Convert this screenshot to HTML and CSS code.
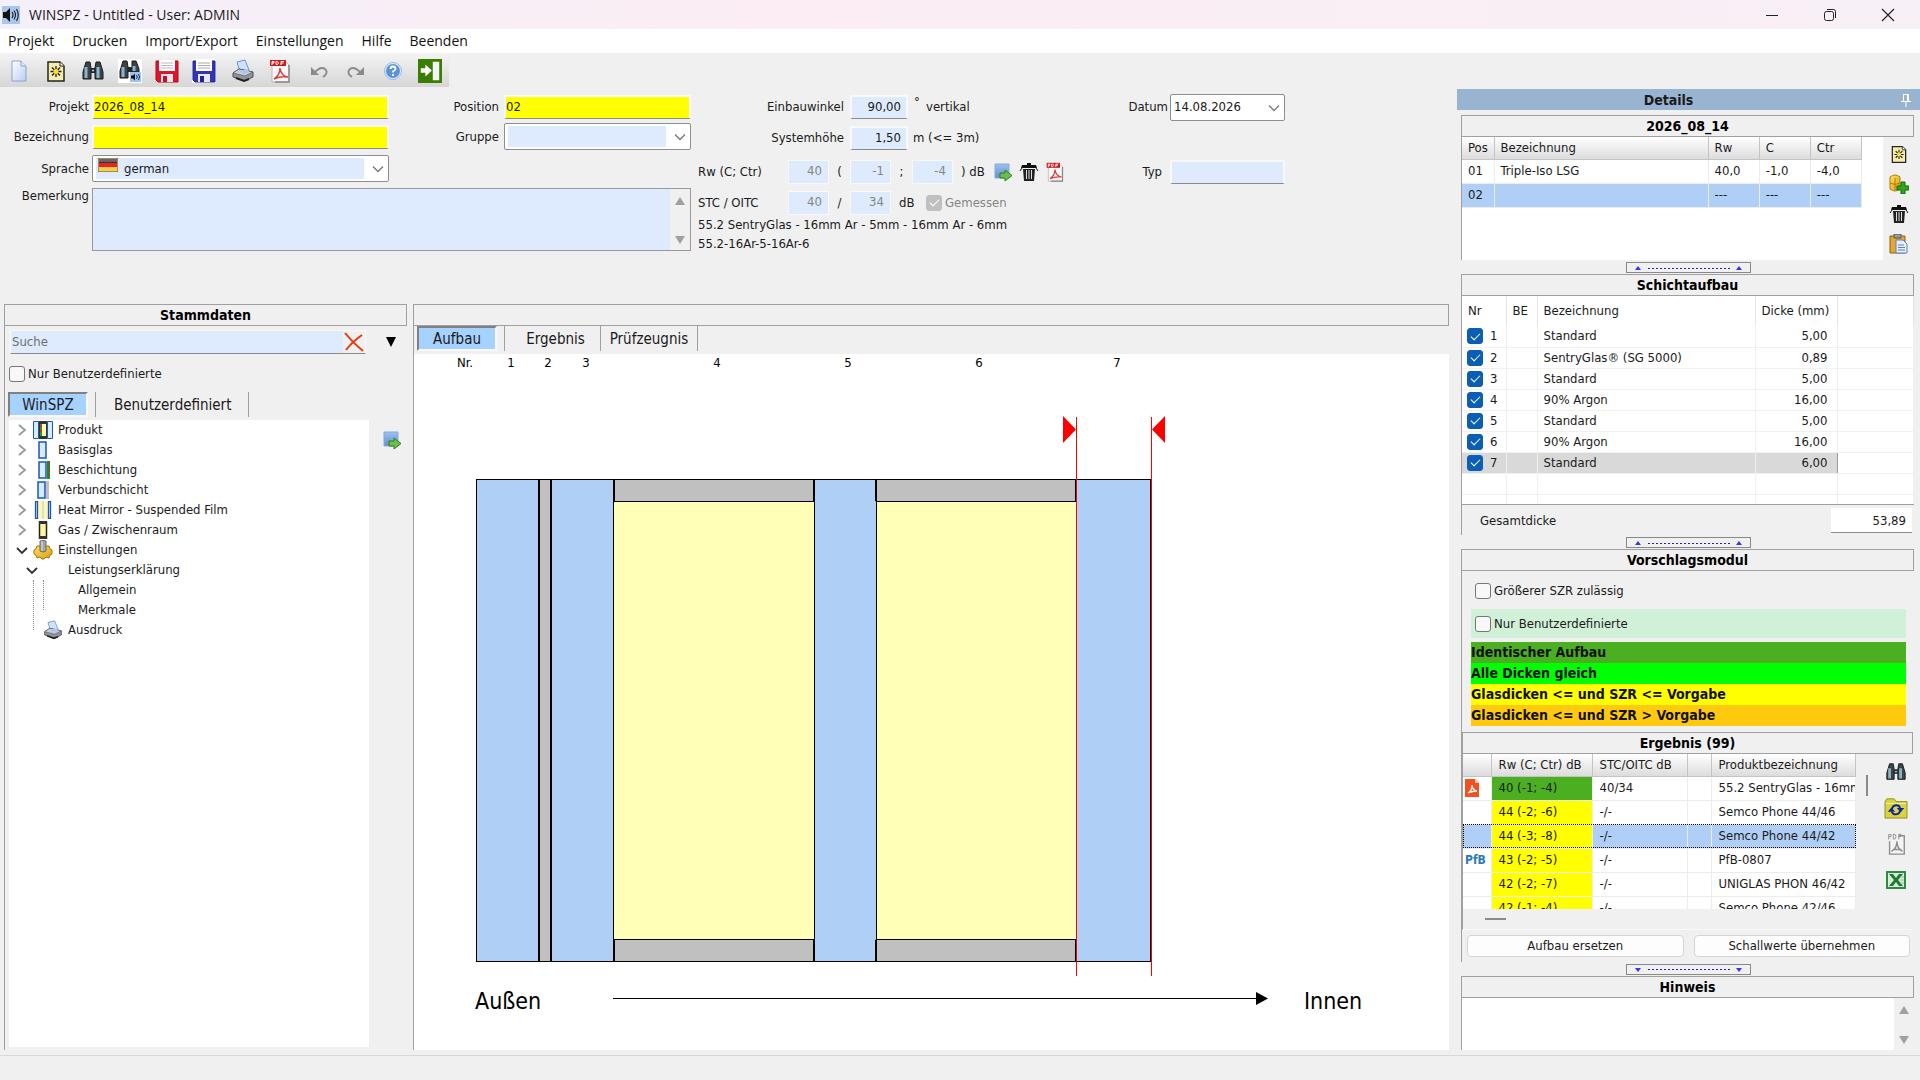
FILE: index.html
```html
<!DOCTYPE html>
<html lang="de">

<head>
    <meta charset="UTF-8">
    <meta name="viewport" content="width=device-width, initial-scale=1.0">
    <title>WINSPZ - Untitled - User: ADMIN</title>
    <link rel="stylesheet" href="styles.css">
</head>

<body>
    <!-- shared icons -->
    <svg class="icon-defs" aria-hidden="true">
        <defs>
            <linearGradient id="g-page" x1="0" y1="0" x2="1" y2="1">
                <stop offset="0" stop-color="#ffffff" />
                <stop offset="1" stop-color="#b9cdf2" />
            </linearGradient>
            <linearGradient id="g-blue" x1="0" y1="0" x2="0" y2="1">
                <stop offset="0" stop-color="#9dc1ee" />
                <stop offset="1" stop-color="#5c8fd6" />
            </linearGradient>
            <linearGradient id="g-gold" x1="0" y1="0" x2="1" y2="1">
                <stop offset="0" stop-color="#ffe463" />
                <stop offset="1" stop-color="#d99a10" />
            </linearGradient>
            <symbol id="i-page" viewBox="0 0 24 24">
                <path d="M5 2h9l5 5v15H5z" fill="url(#g-page)" stroke="#8ba3cf" />
                <path d="M14 2v5h5" fill="#e4edfb" stroke="#8ba3cf" />
            </symbol>
            <symbol id="i-new" viewBox="0 0 24 24">
                <path d="M4 3h12l4 4v15H4z" fill="#f6edb0" stroke="#26261c" stroke-width="1.5" />
                <path d="M16 3v4h4" fill="#fff" stroke="#26261c" />
                <path d="M12 7v11M6.500 12.500h11M8 8.500l8 8M16 8.500l-8 8" stroke="#1d1d12" stroke-width="1.300" />
                <circle cx="12" cy="12.500" r="2.500" fill="#ffdf2a" />
            </symbol>
            <symbol id="i-bino" viewBox="0 0 24 24">
                <path d="M5 3h4l1 6v11H2v-7z" fill="#38464c" stroke="#16191b" />
                <path d="M15 3h4l3 10v7h-8V9z" fill="#38464c" stroke="#16191b" />
                <path d="M10 9h4v5h-4z" fill="#20262a" />
                <path d="M5 8v11M17 8v11" stroke="#8fb3c4" stroke-width="3" />
                <circle cx="12" cy="11.500" r="1" fill="#cfdde2" />
            </symbol>
            <symbol id="i-bino2" viewBox="0 0 24 24">
                <path d="M0 0h24v24H0z" fill="#fff" />
                <path d="M5 2h4l1 6v11H2v-7zM14 2h4l3 8v3h-7z" fill="#38464c" stroke="#16191b" />
                <path d="M10 8h4v5h-4z" fill="#20262a" />
                <path d="M5 8v10M16 7v5" stroke="#8fb3c4" stroke-width="3" />
                <path d="M12 13h11v10H12z" fill="#9fc3ee" />
                <path d="M13 16.500h2l2-2v7l-2-2h-2z" fill="#111" />
                <path d="M18.500 16q1.500 2 0 4M20.500 15q2 3 0 6" fill="none" stroke="#14387a" />
            </symbol>
            <symbol id="i-disk-red" viewBox="0 0 24 24">
                <path d="M1 2h22v21H3l-2-2z" fill="#e3132c" stroke="#b00a20" />
                <path d="M4 1h16v11H4z" fill="#fff" />
                <path d="M6 4h12M6 6.500h12M6 9h12" stroke="#bbb" />
                <path d="M6 15h12v8H6z" fill="#e8e8e8" />
                <path d="M8 17h4v6H8z" fill="#c01025" />
            </symbol>
            <symbol id="i-disk-blue" viewBox="0 0 24 24">
                <path d="M0 0h24v24H0z" fill="#fff" />
                <path d="M1 2h22v21H3l-2-2z" fill="#3333bb" stroke="#22229a" />
                <path d="M4 1h16v11H4z" fill="#fff" />
                <path d="M6 4h12M6 6.500h12M6 9h12" stroke="#aaa" />
                <path d="M6 15h12v8H6z" fill="#e8e8e8" />
                <path d="M8 17h4v6H8z" fill="#22229a" />
            </symbol>
            <symbol id="i-print" viewBox="1 0 22 24">
                <path d="M6 3l8-2 4 10-9 2z" fill="#cfe2fb" stroke="#6f93cf" />
                <path d="M2 14l6-4 14 3v5l-8 4-12-4z" fill="#8f949b" stroke="#4b4f55" />
                <path d="M2 14l6-4 14 3-8 4z" fill="#c9ccd1" stroke="#4b4f55" stroke-width=".6" />
                <path d="M8 12l9-2 1 3-5 2z" fill="#a9c6f3" />
                <path d="M5 19l8 3 5-2" fill="none" stroke="#222" stroke-width="2" />
            </symbol>
            <symbol id="i-pdf" viewBox="0 0 24 24">
                <path d="M4 2h13l4 4v17H4z" fill="#f8f8f8" stroke="#b9b9b9" />
                <path d="M21 6v17H7" fill="none" stroke="#888" stroke-width="1.500" />
                <path d="M2 1h16v6H2z" fill="#cf1b1b" />
                <path d="M4 6V2.500h2v1.500H4M8 2.500v3h1.500l1-1.500-1-1.500zM13 6V2.500h3M13 4h2.500" fill="none" stroke="#fff" />
                <path d="M6 20q6-4 6-11 1 8 8 9-8-1-14 2z" fill="none" stroke="#d84040" stroke-width="1.500" />
            </symbol>
            <symbol id="i-pdf-grey" viewBox="0 0 24 24">
                <path d="M15 3h6v20H5V9" fill="#f4f4f4" stroke="#8d8d8d" stroke-width="1.500" />
                <path d="M4 7V1.500h2.500V4H4M9 1.500v5h2l1-2.500-1-2.500zM15 7V1.500h3M15 4h2.500" fill="none" stroke="#8d8d8d" />
                <path d="M7 20q6-3 6-11 0 8 6 11M9 18h9" fill="none" stroke="#8d8d8d" stroke-width="1.500" />
            </symbol>
            <symbol id="i-undo" viewBox="0 0 24 24">
                <path d="M8 13q6-6 10-3 4 4-2 8" fill="none" stroke="#8a8a8a" stroke-width="1.800" />
                <path d="M4 8v8h8z" fill="#8a8a8a" />
            </symbol>
            <symbol id="i-redo" viewBox="0 0 24 24">
                <path d="M16 13Q10 7 6 10q-4 4 2 8" fill="none" stroke="#8a8a8a" stroke-width="1.800" />
                <path d="M20 8v8h-8z" fill="#8a8a8a" />
            </symbol>
            <symbol id="i-help" viewBox="0 0 24 24">
                <circle cx="12" cy="12" r="8.500" fill="#dfeafa" stroke="#9ab9e4" />
                <circle cx="12" cy="12" r="7" fill="#5b93d9" />
                <path d="M9.500 10q0-2.500 2.500-2.500t2.500 2.500q0 1-2.500 2.500v1M12 15v2" fill="none" stroke="#fff" stroke-width="1.800" />
            </symbol>
            <symbol id="i-exit" viewBox="0 0 26 26">
                <path d="M0 0h26v26H0z" fill="#3a7d00" />
                <path d="M16 3h7v20h-7z" fill="#f4f4f4" />
                <path d="M3 10h5V6l7 6.500L8 19v-4H3z" fill="#fff" />
            </symbol>
            <symbol id="i-sound" viewBox="0 0 18 18">
                <path d="M0 0h18v18H0z" fill="#a6c8f0" />
                <path d="M1 6h3l4-4v14l-4-4H1z" fill="#111" />
                <path d="M10 6q2 3 0 6M12 4.500q3 4.500 0 9M14.500 3q3.500 6 0 12" fill="none" stroke="#222" stroke-width="1.200" />
            </symbol>
            <symbol id="i-apply" viewBox="0 0 20 20">
                <path d="M2 2h14v14H2z" fill="url(#g-blue)" stroke="#86a9dc" />
                <path d="M7 11h5V8l7 5.500-7 5.500v-3H7z" fill="#6cc04a" stroke="#2f7d1c" />
            </symbol>
            <symbol id="i-trash" viewBox="0 0 20 20">
                <path d="M8 1h4v2h5l1 3H2l1-3h5z" fill="#111" />
                <path d="M4 7h12l-1 12H5z" fill="#222" />
                <path d="M7.500 8v9M10 8v9M12.500 8v9" stroke="#ddd" />
                <path d="M3 6l-2 3M17 6l2 3" stroke="#111" />
            </symbol>
            <symbol id="i-dbadd" viewBox="0 0 20 20">
                <path d="M1 3q5-4 10 0v12q-5 4-10 0z" fill="url(#g-gold)" stroke="#b07d09" />
                <path d="M1 9q5 3 10 0M6 4v12" fill="none" stroke="#b07d09" />
                <path d="M12 8h4v4h4v4h-4v4h-4v-4H8v-4h4z" fill="#2da51c" stroke="#14690c" />
            </symbol>
            <symbol id="i-clip" viewBox="0 0 20 20">
                <path d="M1 2h15v17H1z" fill="#e0a92f" stroke="#8d6208" />
                <path d="M5 0h7v4H5z" fill="#9b9b9b" stroke="#555" />
                <path d="M7 6h7l4 4v9H7z" fill="#e6effc" stroke="#5f7fbd" />
                <path d="M9 11h6M9 13.500h7M9 16h7" stroke="#5f7fbd" />
            </symbol>
            <symbol id="i-folder" viewBox="0 0 26 24">
                <path d="M1 5l2-3h8l2 3h12v18H1z" fill="#d8d43a" stroke="#8d8a20" />
                <path d="M2 7h22" stroke="#f6f3a0" />
                <path d="M8.500 13q1-4 5-4 3 0 4 3" fill="none" stroke="#0a1fae" stroke-width="2" />
                <path d="M17.500 15q-1 4-5 4-3 0-4-3" fill="none" stroke="#0a1fae" stroke-width="2" />
                <path d="M14 12h8l-4 4.500zM4 16h8l-4-4.500z" fill="#0a1fae" />
            </symbol>
            <symbol id="i-excel" viewBox="-1 -2 22 22">
                <path d="M0 0h20v18H0z" fill="#2e8b3d" />
                <path d="M2 2h16v14H2z" fill="#d8eedb" />
                <path d="M3 3h4l3 4 3-4h4l-5 6 5 6h-4l-3-4-3 4H3l5-6z" fill="#1c7a2c" />
                <path d="M14 9h4M14 12h4M14 6h4" stroke="#8fc79a" />
            </symbol>
            <symbol id="i-gear" viewBox="0 0 20 20">
                <path d="M1 10l2-1 1-3h12l1 3 2 1v4l-2 1-1 3-3-1-2 2H9l-2-2-3 1-1-3-2-1z" fill="url(#g-gold)" stroke="#a8740a" />
                <path d="M7 1q3-1 6 0v10q-3 2-6 0z" fill="#a4a4a4" stroke="#6a6a6a" />
                <path d="M9 1v10" stroke="#e4e4e4" />
            </symbol>
            <symbol id="i-chevron" viewBox="0 0 12 12">
                <path d="M1 3.500l5 5 5-5" fill="none" stroke="currentColor" stroke-width="1.300" />
            </symbol>
            <symbol id="i-closed" viewBox="0 0 12 12">
                <path d="M3 1l6 5-6 5" fill="none" stroke="#9a9a9a" stroke-width="1.800" />
            </symbol>
            <symbol id="i-open" viewBox="0 0 12 12">
                <path d="M1 4l5 5 5-5" fill="none" stroke="#333" stroke-width="1.800" />
            </symbol>
            <symbol id="i-handle-up" viewBox="0 0 123 9">
                <path d="M8 7l3-4 3 4zM109 7l3-4 3 4z" fill="#3333ff" />
                <path d="M21 5.500h84" stroke="#2020a0" stroke-dasharray="2 2" />
            </symbol>
            <symbol id="i-handle-down" viewBox="0 0 123 9">
                <path d="M8 3l3 4 3-4zM109 3l3 4 3-4z" fill="#3333ff" />
                <path d="M21 4.500h84" stroke="#2020a0" stroke-dasharray="2 2" />
            </symbol>
        </defs>
    </svg>

    <div class="app">
        <!-- window title -->
        <header class="titlebar">
            <svg class="app-icon"><use href="#i-sound" /></svg>
            <span class="title">WINSPZ - Untitled - User: ADMIN</span>
            <div class="window-buttons">
                <button aria-label="Minimieren"><svg viewBox="0 0 14 14"><path d="M1 7.500h12" stroke="#222" /></svg></button>
                <button aria-label="Wiederherstellen"><svg viewBox="0 0 14 14"><rect x="1.500" y="3.500" width="9" height="9" rx="2" fill="none" stroke="#222" /><path d="M4 1.500h6.500q2 0 2 2V10" fill="none" stroke="#222" /></svg></button>
                <button aria-label="Schließen"><svg viewBox="0 0 14 14"><path d="M1 1l12 12M13 1L1 13" stroke="#222" stroke-width="1.200" /></svg></button>
            </div>
        </header>

        <nav class="menu">
            <a href="#">Projekt</a>
            <a href="#">Drucken</a>
            <a href="#">Import/Export</a>
            <a href="#">Einstellungen</a>
            <a href="#">Hilfe</a>
            <a href="#">Beenden</a>
        </nav>

        <div class="toolbar">
            <button aria-label="Neu"><svg><use href="#i-page" /></svg></button>
            <button aria-label="Neue Position"><svg><use href="#i-new" /></svg></button>
            <button aria-label="Suchen"><svg><use href="#i-bino" /></svg></button>
            <button aria-label="Schallsuche"><svg><use href="#i-bino2" /></svg></button>
            <button aria-label="Speichern"><svg><use href="#i-disk-red" /></svg></button>
            <button aria-label="Speichern unter"><svg><use href="#i-disk-blue" /></svg></button>
            <button class="group" aria-label="Drucken"><svg><use href="#i-print" /></svg></button>
            <button aria-label="PDF"><svg><use href="#i-pdf" /></svg></button>
            <button class="group" aria-label="Rückgängig"><svg><use href="#i-undo" /></svg></button>
            <button aria-label="Wiederholen"><svg><use href="#i-redo" /></svg></button>
            <button aria-label="Hilfe"><svg><use href="#i-help" /></svg></button>
            <button aria-label="Beenden"><svg><use href="#i-exit" /></svg></button>
        </div>

        <div class="main">
            <div class="workspace">
                <!-- project form -->
                <form class="form">
                    <div class="form-project">
                        <label for="projekt">Projekt</label>
                        <input class="field required" id="projekt" type="text" value="2026_08_14">
                        <label for="position">Position</label>
                        <input class="field required" id="position" type="text" value="02">

                        <label for="bezeichnung">Bezeichnung</label>
                        <input class="field required" id="bezeichnung" type="text">
                        <label for="gruppe">Gruppe</label>
                        <div class="combo">
                            <select id="gruppe"><option></option></select>
                            <svg class="chevron"><use href="#i-chevron" /></svg>
                        </div>

                        <label for="sprache">Sprache</label>
                        <div class="combo with-flag">
                            <select id="sprache"><option>german</option></select>
                            <svg class="flag" viewBox="0 0 20 14">
                                <path d="M0 0h20v14H0z" fill="#333" />
                                <path d="M1 5h18v4H1z" fill="#e22" />
                                <path d="M1 9h18v4H1z" fill="#f5cf45" />
                                <path d="M1 1h18v3H1z" fill="#666" />
                                <path d="M.5.5h19v13H.5z" fill="none" stroke="#a58a5c" />
                            </svg>
                            <svg class="chevron"><use href="#i-chevron" /></svg>
                        </div>

                        <label class="top" for="bemerkung">Bemerkung</label>
                        <div class="memo">
                            <textarea id="bemerkung"></textarea>
                            <div class="scroll"><i class="up"></i><i class="down"></i></div>
                        </div>
                    </div>

                    <div class="form-values">
                        <div class="lines">
                            <div class="line">
                                <label class="wide" for="winkel">Einbauwinkel</label>
                                <input class="field num" id="winkel" type="text" value="90,00">
                                <span class="degree">°</span><span>vertikal</span>
                            </div>
                            <div class="line">
                                <label class="wide" for="hoehe">Systemhöhe</label>
                                <input class="field num" id="hoehe" type="text" value="1,50">
                                <span class="unit">m (&lt;= 3m)</span>
                            </div>
                        </div>
                        <div class="lines">
                            <div class="line">
                                <label class="start" for="rw">Rw (C; Ctr)</label>
                                <input class="field small" id="rw" type="text" value="40" disabled>
                                <span class="sep">(</span>
                                <input class="field small" aria-label="C" type="text" value="-1" disabled>
                                <span class="sep">;</span>
                                <input class="field small" aria-label="Ctr" type="text" value="-4" disabled>
                                <span class="unit db">) dB</span>
                                <div class="line-icons">
                                    <button type="button" aria-label="Übernehmen"><svg><use href="#i-apply" /></svg></button>
                                    <button type="button" aria-label="Löschen"><svg><use href="#i-trash" /></svg></button>
                                    <button type="button" aria-label="PDF"><svg><use href="#i-pdf" /></svg></button>
                                </div>
                            </div>
                            <div class="line">
                                <label class="start" for="stc">STC / OITC</label>
                                <input class="field small" id="stc" type="text" value="40" disabled>
                                <span class="sep">/</span>
                                <input class="field small" aria-label="OITC" type="text" value="34" disabled>
                                <span class="unit db">dB</span>
                                <label class="check muted"><input type="checkbox" checked disabled>Gemessen</label>
                            </div>
                        </div>
                        <p class="structure">55.2 SentryGlas - 16mm Ar - 5mm - 16mm Ar - 6mm</p>
                        <p class="structure">55.2-16Ar-5-16Ar-6</p>
                    </div>

                    <div class="form-date">
                        <label for="datum">Datum</label>
                        <div class="combo plain">
                            <select id="datum"><option>14.08.2026</option></select>
                            <svg class="chevron"><use href="#i-chevron" /></svg>
                        </div>
                        <label for="typ">Typ</label>
                        <input class="field" id="typ" type="text">
                    </div>
                </form>

                <div class="panels">
                    <!-- master data -->
                    <section class="panel stammdaten">
                        <h2>Stammdaten</h2>
                        <div class="search">
                            <div class="search-box">
                                <input type="text" placeholder="Suche" aria-label="Suche">
                                <button aria-label="Leeren"><svg viewBox="0 0 20 20"><path d="M1 1q8 10 18 18M18 3Q8 10 2 18" fill="none" stroke="#e8380d" stroke-width="2" /></svg></button>
                            </div>
                            <button class="drop" aria-label="Mehr"></button>
                        </div>
                        <label class="check user-only"><input type="checkbox">Nur Benutzerdefinierte</label>
                        <div class="tabs">
                            <button class="tab active">WinSPZ</button>
                            <button class="tab">Benutzerdefiniert</button>
                        </div>
                        <div class="tree-row">
                            <ul class="tree">
                                <li><div class="node"><svg class="arrow"><use href="#i-closed" /></svg>
                                    <svg class="node-icon" viewBox="0 0 20 18"><path d="M.5.5h5v17h-5zM14.500.5h5v17h-5z" fill="#d8eafd" stroke="#1a57b8" /><path d="M6 0h8v18H6z" fill="#333" /><path d="M7 3h6v12H7z" fill="#fff9a8" /><path d="M8 3v12" stroke="#1e9b2b" stroke-width="2" /><path d="M8 4v10" stroke="#e02020" stroke-width="2" stroke-dasharray="2 3" /></svg>Produkt</div></li>
                                <li><div class="node"><svg class="arrow"><use href="#i-closed" /></svg>
                                    <svg class="node-icon" viewBox="0 0 20 18"><path d="M6 1h7v16H6z" fill="#d8eafd" stroke="#1a57b8" stroke-width="1.500" /></svg>Basisglas</div></li>
                                <li><div class="node"><svg class="arrow"><use href="#i-closed" /></svg>
                                    <svg class="node-icon" viewBox="0 0 20 18"><path d="M6 1h7v16H6z" fill="#d8eafd" stroke="#1a57b8" stroke-width="1.500" /><path d="M15.500 0v18" stroke="#1e8b2b" stroke-width="3" /><path d="M15.500 1v16" stroke="#e02020" stroke-dasharray="2 2" /></svg>Beschichtung</div></li>
                                <li><div class="node"><svg class="arrow"><use href="#i-closed" /></svg>
                                    <svg class="node-icon" viewBox="0 0 20 18"><path d="M13 0h3v18h-3z" fill="#c0c0c0" /><path d="M5 1h7v16H5z" fill="#d8eafd" stroke="#1a57b8" stroke-width="1.500" /></svg>Verbundschicht</div></li>
                                <li><div class="node"><svg class="arrow"><use href="#i-closed" /></svg>
                                    <svg class="node-icon" viewBox="0 0 20 18"><path d="M5 0h10v18H5z" fill="#fdf8b8" /><path d="M10 0v18" stroke="#c8c8c8" /><path d="M2.500.5h2v17h-2zM15.500.5h2v17h-2z" fill="#d8eafd" stroke="#1a57b8" stroke-width="1.300" /></svg>Heat Mirror - Suspended Film</div></li>
                                <li><div class="node"><svg class="arrow"><use href="#i-closed" /></svg>
                                    <svg class="node-icon" viewBox="0 0 20 18"><path d="M6.500 1h7v16h-7z" fill="#fdf5a0" stroke="#222" stroke-width="1.500" /><path d="M6 0h8v3H6zM6 15h8v3H6z" fill="#333" /></svg>Gas / Zwischenraum</div></li>
                                <li><div class="node"><svg class="arrow"><use href="#i-open" /></svg>
                                    <svg class="node-icon large"><use href="#i-gear" /></svg>Einstellungen</div>
                                    <ul class="branch">
                                        <li><div class="node"><svg class="arrow"><use href="#i-open" /></svg><span class="node-icon"></span>Leistungserklärung</div>
                                            <ul class="branch">
                                                <li><div class="node"><span class="arrow"></span><span class="node-icon"></span>Allgemein</div></li>
                                                <li><div class="node"><span class="arrow"></span><span class="node-icon"></span>Merkmale</div></li>
                                            </ul>
                                        </li>
                                        <li><div class="node"><span class="arrow"></span><svg class="node-icon large"><use href="#i-print" /></svg>Ausdruck</div></li>
                                    </ul>
                                </li>
                            </ul>
                            <button class="apply" aria-label="Übernehmen"><svg><use href="#i-apply" /></svg></button>
                        </div>
                    </section>

                    <!-- glass cross section -->
                    <section class="panel aufbau">
                        <h2></h2>
                        <div class="tabs">
                            <button class="tab active">Aufbau</button>
                            <button class="tab">Ergebnis</button>
                            <button class="tab tight">Prüfzeugnis</button>
                        </div>
                        <svg class="drawing" viewBox="0 0 1035 696" preserveAspectRatio="xMinYMin meet">
                            <g class="layer-nr">
                                <text x="51" y="13">Nr.</text>
                                <text x="97" y="13">1</text>
                                <text x="134" y="13">2</text>
                                <text x="172" y="13">3</text>
                                <text x="303" y="13">4</text>
                                <text x="434" y="13">5</text>
                                <text x="565" y="13">6</text>
                                <text x="703" y="13">7</text>
                            </g>
                            <g class="glass">
                                <rect x="62.500" y="125.500" width="62" height="482" />
                                <rect x="137.500" y="125.500" width="62" height="482" />
                                <rect x="400.500" y="125.500" width="62" height="482" />
                                <rect x="662.500" y="125.500" width="74" height="482" />
                            </g>
                            <g class="gas">
                                <rect x="199.500" y="125.500" width="201" height="482" />
                                <rect x="462.500" y="125.500" width="200" height="482" />
                            </g>
                            <g class="spacer">
                                <path d="M125 125.500h12v482h-12zM200 125.500h200v22H200zM200 585.500h200v22H200zM462 125.500h200v22H462zM462 585.500h200v22H462z" />
                            </g>
                            <path class="edges" d="M125 126v481M137 126v481M200 126v21M200 586v21M400 126v21M400 586v21M462 126v21M462 586v21M662 126v21M662 586v21" />
                            <path class="selection" d="M662.500 63v559M737.500 63v559" />
                            <path class="marker" d="M649 62v27l13-13.500zM751 62v27l-13-13.500z" />
                            <text class="side" x="61" y="655">Außen</text>
                            <path class="direction" d="M199 644.500h645" />
                            <path d="M842 638l12 6.500-12 6.500z" />
                            <text class="side" x="890" y="655">Innen</text>
                        </svg>
                    </section>
                </div>
            </div>

            <!-- details sidebar -->
            <aside class="details">
                <div class="details-title">
                    <span>Details</span>
                    <svg viewBox="0 0 12 14"><path d="M3.500 1v7M8.500 1v7M3 1.500h5M1 8.500h10M6 9v5M7.500 1v7" fill="none" stroke="#fff" /></svg>
                </div>

                <section class="panel positions">
                    <h2>2026_08_14</h2>
                    <div class="panel-row">
                        <div class="list">
                            <table class="grid positions-table">
                                <thead>
                                    <tr><th>Pos</th><th>Bezeichnung</th><th>Rw</th><th>C</th><th>Ctr</th></tr>
                                </thead>
                                <tbody>
                                    <tr><td>01</td><td>Triple-Iso LSG</td><td>40,0</td><td>-1,0</td><td>-4,0</td></tr>
                                    <tr class="selected"><td>02</td><td></td><td>---</td><td>---</td><td>---</td></tr>
                                </tbody>
                            </table>
                        </div>
                        <div class="side-icons">
                            <button aria-label="Neu"><svg><use href="#i-new" /></svg></button>
                            <button aria-label="Hinzufügen"><svg><use href="#i-dbadd" /></svg></button>
                            <button aria-label="Löschen"><svg><use href="#i-trash" /></svg></button>
                            <button aria-label="Einfügen"><svg><use href="#i-clip" /></svg></button>
                        </div>
                    </div>
                </section>

                <button class="splitter" aria-label="Einklappen"><svg><use href="#i-handle-up" /></svg></button>

                <section class="panel layers">
                    <h2>Schichtaufbau</h2>
                    <div class="list">
                        <table class="layers-table">
                            <thead>
                                <tr><th>Nr</th><th>BE</th><th>Bezeichnung</th><th class="right">Dicke (mm)</th><th></th></tr>
                            </thead>
                            <tbody>
                                <tr><td><label class="check"><input type="checkbox" checked>1</label></td><td></td><td>Standard</td><td class="right">5,00</td><td></td></tr>
                                <tr><td><label class="check"><input type="checkbox" checked>2</label></td><td></td><td>SentryGlas® (SG 5000)</td><td class="right">0,89</td><td></td></tr>
                                <tr><td><label class="check"><input type="checkbox" checked>3</label></td><td></td><td>Standard</td><td class="right">5,00</td><td></td></tr>
                                <tr><td><label class="check"><input type="checkbox" checked>4</label></td><td></td><td>90% Argon</td><td class="right">16,00</td><td></td></tr>
                                <tr><td><label class="check"><input type="checkbox" checked>5</label></td><td></td><td>Standard</td><td class="right">5,00</td><td></td></tr>
                                <tr><td><label class="check"><input type="checkbox" checked>6</label></td><td></td><td>90% Argon</td><td class="right">16,00</td><td></td></tr>
                                <tr class="current"><td><label class="check"><input type="checkbox" checked>7</label></td><td></td><td>Standard</td><td class="right">6,00</td><td></td></tr>
                                <tr><td></td><td></td><td></td><td></td><td></td></tr>
                                <tr><td></td><td></td><td></td><td></td><td></td></tr>
                            </tbody>
                        </table>
                    </div>
                    <div class="total">
                        <label for="gesamt">Gesamtdicke</label>
                        <input id="gesamt" type="text" value="53,89">
                    </div>
                </section>

                <button class="splitter" aria-label="Einklappen"><svg><use href="#i-handle-up" /></svg></button>

                <section class="panel proposals">
                    <h2>Vorschlagsmodul</h2>
                    <div class="options">
                        <label class="check option"><input type="checkbox">Größerer SZR zulässig</label>
                        <label class="check option user"><input type="checkbox">Nur Benutzerdefinierte</label>
                        <ul class="legend">
                            <li class="same">Identischer Aufbau</li>
                            <li class="thick">Alle Dicken gleich</li>
                            <li class="less">Glasdicken &lt;= und SZR &lt;= Vorgabe</li>
                            <li class="more">Glasdicken &lt;= und SZR &gt; Vorgabe</li>
                        </ul>
                    </div>
                    <div class="results">
                        <h2>Ergebnis (99)</h2>
                        <div class="panel-row">
                            <div class="result-list">
                                <table class="grid results-table">
                                    <thead>
                                        <tr><th></th><th>Rw (C; Ctr) dB</th><th>STC/OITC dB</th><th></th><th>Produktbezeichnung</th></tr>
                                    </thead>
                                    <tbody>
                                        <tr><td><svg class="mark" viewBox="0 0 14 18"><path d="M0 0h10l4 4v14H0z" fill="#f4511e" /><path d="M10 0v4h4z" fill="#ffc4b0" /><path d="M3 14q4-2 4-8 0 5 5 6-5 0-9 2z" fill="none" stroke="#fff" stroke-width="1.300" /></svg></td><td class="same">40 (-1; -4)</td><td>40/34</td><td></td><td>55.2 SentryGlas - 16mm Ar</td></tr>
                                        <tr><td></td><td class="less">44 (-2; -6)</td><td>-/-</td><td></td><td>Semco Phone 44/46</td></tr>
                                        <tr class="selected"><td></td><td class="less">44 (-3; -8)</td><td>-/-</td><td></td><td>Semco Phone 44/42</td></tr>
                                        <tr><td><span class="pfb">PfB</span></td><td class="less">43 (-2; -5)</td><td>-/-</td><td></td><td>PfB-0807</td></tr>
                                        <tr><td></td><td class="less">42 (-2; -7)</td><td>-/-</td><td></td><td>UNIGLAS PHON 46/42</td></tr>
                                        <tr><td></td><td class="less">42 (-1; -4)</td><td>-/-</td><td></td><td>Semco Phone 42/46</td></tr>
                                    </tbody>
                                </table>
                            </div>
                            <div class="thumb-v"></div>
                            <div class="side-icons wide">
                                <button aria-label="Suchen"><svg><use href="#i-bino" /></svg></button>
                                <button aria-label="Aktualisieren"><svg><use href="#i-folder" /></svg></button>
                                <button aria-label="PDF"><svg><use href="#i-pdf-grey" /></svg></button>
                                <button aria-label="Excel"><svg><use href="#i-excel" /></svg></button>
                            </div>
                        </div>
                        <div class="thumb-h"></div>
                    </div>
                    <div class="actions">
                        <button>Aufbau ersetzen</button>
                        <button>Schallwerte übernehmen</button>
                    </div>
                </section>

                <button class="splitter" aria-label="Ausklappen"><svg><use href="#i-handle-down" /></svg></button>

                <section class="panel note">
                    <h2>Hinweis</h2>
                    <div class="memo">
                        <textarea aria-label="Hinweis"></textarea>
                        <div class="scroll"><i class="up"></i><i class="down"></i></div>
                    </div>
                </section>
            </aside>
        </div>

        <footer class="statusbar"></footer>
    </div>
</body>

</html>
```
FILE: styles.css
```css
* {
    box-sizing: border-box;
}

body {
    margin: 0;
    background-color: #f0f0f0;
    color: #1a1a1a;
    font-family: "DejaVu Sans Condensed", "Noto Sans", sans-serif;
    font-size: 13px;
    line-height: 20px;
}

button,
input,
select,
textarea {
    font: inherit;
    color: inherit;
    margin: 0;
}

button {
    padding: 0;
    border: 0;
    background: none;
}

h2,
p,
ul {
    margin: 0;
    padding: 0;
    list-style: none;
}

svg {
    display: block;
}

.icon-defs {
    position: absolute;
    width: 0;
    height: 0;
}

.app {
    display: flex;
    flex-direction: column;
    height: 100vh;
    overflow: hidden;
}

/* title and menu */

.titlebar {
    display: flex;
    align-items: center;
    height: 29px;
    padding: 0 3px 0 2px;
    background-image: linear-gradient(90deg, #f4f0fb 0%, #fbedf3 40%, #f7f0f6 100%);
    font-family: "Open Sans", sans-serif;
    font-size: 14px;
}

.app-icon {
    width: 18px;
    height: 18px;
    margin-right: 9px;
}

.title {
    flex: 1;
}

.window-buttons {
    display: flex;
}

.window-buttons button {
    display: grid;
    place-items: center;
    width: 58px;
    height: 29px;
}

.window-buttons svg {
    width: 14px;
    height: 14px;
}

.menu {
    display: flex;
    gap: 18px;
    height: 24px;
    padding: 0 8px;
    background-color: #fff;
    font-family: "Open Sans", sans-serif;
    font-size: 14px;
    line-height: 24px;
}

.menu a {
    color: #111;
    text-decoration: none;
}

.toolbar {
    display: flex;
    align-self: flex-start;
    align-items: center;
    height: 34px;
    padding: 2px 1px 0 0;
    background-image: linear-gradient(#f4f4f4, #d6d6d6);
}

.toolbar button {
    display: grid;
    place-items: center;
    width: 37px;
}

.toolbar .group {
    margin-left: 2px;
}

.toolbar svg {
    width: 24px;
    height: 24px;
}

.main {
    flex: 1;
    display: flex;
    min-height: 0;
}

.workspace {
    flex: 1;
    display: flex;
    flex-direction: column;
    min-width: 0;
}

/* form */

.form {
    display: flex;
    height: 217px;
    padding-top: 7px;
}

.field {
    width: 100%;
    height: 24px;
    padding: 0 2px 2px;
    border: 2px solid #f8f8f8;
    border-bottom: 1px solid #8a8a8a;
    background-color: #deebff;
}

.required {
    padding-left: 0;
    background-color: #ff0;
}

.field:disabled {
    border: 1px solid #f8f8f8;
    color: #858585;
}

.form-project {
    display: grid;
    grid-template-columns: 92px 297px 115px 187px;
    grid-template-rows: 25px 25px 29px 63px;
    row-gap: 5px;
    align-items: center;
    height: 157px;
    margin-right: 7px;
}

.form-project > label {
    padding-right: 3px;
    text-align: right;
}

.form-project > label[for="position"],
.form-project > label[for="gruppe"] {
    padding-right: 5px;
}

.form-project > .top {
    grid-column: 1;
    align-self: start;
    line-height: 16px;
}

.form-project .memo {
    grid-column: 2 / 5;
}

.combo {
    position: relative;
    height: 27px;
    border: 1px solid #8e8e8e;
    border-radius: 2px;
    background-color: #fff;
    padding: 2px 24px 2px 3px;
}

.combo select {
    appearance: none;
    display: block;
    width: 100%;
    height: 100%;
    padding: 0 2px;
    border: 0;
    background-color: #deebff;
}

.combo.with-flag select {
    padding-left: 28px;
}

.combo.plain select {
    background-color: #fff;
    padding: 0;
}

.flag {
    position: absolute;
    left: 5px;
    top: 2px;
    width: 20px;
    height: 14px;
}

.chevron {
    position: absolute;
    right: 4px;
    top: 7px;
    width: 12px;
    height: 12px;
    color: #777;
    pointer-events: none;
}

.memo {
    display: flex;
    height: 63px;
    border: 1px solid #999;
}

.memo textarea {
    flex: 1;
    border: 0;
    background-color: #deebff;
    resize: none;
}

.scroll {
    display: flex;
    flex-direction: column;
    justify-content: space-between;
    align-items: center;
    width: 20px;
    padding: 8px 0 6px;
    background-color: #f0f0f0;
}

.scroll i {
    border: 5px solid transparent;
}

.scroll .up {
    border-top: 0;
    border-bottom: 8px solid #a0a0a0;
}

.scroll .down {
    border-bottom: 0;
    border-top: 8px solid #a0a0a0;
}

.form-values {
    width: 422px;
}

.lines {
    display: grid;
    row-gap: 6px;
}

.lines + .lines {
    margin-top: 9px;
}

.line {
    display: flex;
    align-items: center;
    height: 25px;
}

.line .wide {
    width: 152px;
    padding-right: 6px;
    text-align: right;
}

.line .start {
    width: 90px;
}

.line .num {
    width: 58px;
    padding-right: 5px;
    text-align: right;
}

.line .small {
    width: 41px;
    padding-right: 6px;
    text-align: right;
}

.line .sep {
    width: 21px;
    text-align: center;
}

.line .unit {
    padding-left: 5px;
}

.line .db {
    width: 35px;
    padding-left: 8px;
}

.line .degree {
    width: 18px;
    padding-left: 6px;
    line-height: 16px;
    align-self: flex-start;
}

.line-icons {
    display: flex;
    gap: 6px;
    margin-left: 5px;
}

.line-icons svg {
    width: 20px;
    height: 20px;
}

.check {
    display: flex;
    align-items: center;
    gap: 3px;
}

.check input {
    appearance: none;
    display: grid;
    place-items: center;
    width: 16px;
    height: 16px;
    border: 1px solid #777;
    border-radius: 3px;
    background-color: #f8f8f8;
}

.check input:checked {
    border-color: #0a5fb4;
    background-color: #0a5fb4;
}

.check input:checked::after {
    content: "";
    width: 8px;
    height: 4px;
    margin-bottom: 2px;
    border-left: 1px solid #fff;
    border-bottom: 1px solid #fff;
    transform: rotate(-45deg);
}

.muted {
    color: #858585;
}

.check input:disabled {
    border-color: #c0c0c0;
    background-color: #c0c0c0;
}

.structure {
    line-height: 19px;
}

.form-date {
    display: grid;
    grid-template-columns: 50px 115px;
    grid-template-rows: 26px 26px;
    row-gap: 39px;
    align-items: center;
    height: 91px;
}

.form-date label {
    text-align: right;
    padding-right: 2px;
}

.form-date label[for="typ"] {
    padding-right: 8px;
}

/* panels */

.panels {
    flex: 1;
    display: flex;
    gap: 6px;
    min-height: 0;
    padding: 0 8px 5px 4px;
}

.panel {
    border-left: 1px solid #a0a0a0;
}

.panel h2 {
    height: 22px;
    border: 1px solid #a0a0a0;
    border-left: 0;
    color: #000;
    font-size: 14px;
    line-height: 20px;
    text-align: center;
}

.stammdaten {
    display: flex;
    flex-direction: column;
    width: 403px;
}

.search {
    display: flex;
    align-items: center;
    height: 28px;
    padding: 4px 11px 0 5px;
}

.search-box {
    display: flex;
    flex: 1;
    height: 24px;
    border: 1px solid #f8f8f8;
    border-bottom: 1px solid #8a8a8a;
    background-color: #deebff;
}

.search-box input {
    flex: 1;
    min-width: 0;
    padding: 0 1px;
    border: 0;
    background: none;
}

.search-box input::placeholder {
    color: #6d6d6d;
}

.search-box button {
    background-color: #f0f0f0;
}

.search-box svg {
    width: 22px;
    height: 20px;
}

.drop {
    margin-left: 20px;
    border: 5px solid transparent;
    border-top: 10px solid #000;
    border-bottom: 0;
}

.user-only {
    height: 38px;
    padding: 2px 0 0 4px;
}

.tabs {
    display: flex;
    height: 26px;
    font-size: 15px;
}

.tab {
    height: 25px;
    padding: 0 18px;
    border-right: 1px solid #a0a0a0;
}

.tab.active {
    border: 2px solid #f8f8f8;
    border-top-color: #808080;
    border-left-color: #808080;
    background-color: #a6d2ff;
}

.tab.active + .tab {
    border-left: 1px solid #a0a0a0;
    margin-left: 7px;
}

.stammdaten .tabs {
    height: 28px;
    padding-left: 3px;
}

.stammdaten .tab {
    width: 154px;
}

.stammdaten .tab.active {
    width: 80px;
    padding: 0;
}

.tree-row {
    flex: 1;
    display: flex;
    min-height: 0;
    padding: 0 5px 3px 4px;
}

.tree {
    flex: 1;
    background-color: #fff;
}

.node {
    display: flex;
    align-items: center;
    height: 20px;
    padding-left: 7px;
}

.arrow {
    width: 12px;
    height: 12px;
    margin-right: 5px;
}

.node-icon {
    width: 20px;
    height: 18px;
    margin-right: 5px;
}

.node-icon.large {
    height: 20px;
}

.branch {
    position: relative;
    padding-left: 10px;
}

/* dotted guide of an open branch */
.branch::before {
    content: "";
    position: absolute;
    left: 24px;
    top: 20px;
    bottom: 10px;
    border-left: 1px dotted #888;
}

.branch .branch::before {
    top: 0;
}

.apply {
    align-self: flex-start;
    margin: 10px 0 0 13px;
}

.apply svg {
    width: 20px;
    height: 20px;
}

.aufbau {
    flex: 1;
    display: flex;
    flex-direction: column;
    min-width: 0;
}

.aufbau .tabs {
    height: 28px;
    padding-left: 3px;
}

.aufbau .tab {
    width: 97px;
}

.aufbau .tab + .tab {
    padding: 0 0 0 6px;
}

.aufbau .tab.tight {
    padding: 0;
}

.aufbau .tab.active {
    width: 80px;
    padding: 0;
}

.drawing {
    flex: 1;
    min-height: 0;
    width: 100%;
    background-color: #fff;
}

.layer-nr {
    font-size: 13px;
    text-anchor: middle;
}

.glass rect {
    fill: #b0cff7;
    stroke: #000;
}

.gas rect {
    fill: #ffffb8;
    stroke: #000;
}

.spacer path {
    fill: #c0c0c0;
    stroke: #000;
}

.edges {
    stroke: #000;
    stroke-width: 2px;
}

.selection {
    stroke: #f00;
}

.marker {
    fill: #f00;
}

.direction {
    stroke: #000;
}

.side {
    font-size: 23px;
}

/* details sidebar */

.details {
    display: flex;
    flex-direction: column;
    width: 463px;
    padding: 2px 0 5px;
}

.details-title {
    display: flex;
    align-items: center;
    height: 21px;
    padding-right: 8px;
    background-color: #99b4d1;
    font-size: 14px;
    font-weight: bold;
    text-align: center;
}

.details-title span {
    flex: 1;
    padding-right: 20px;
}

.details-title svg {
    width: 12px;
    height: 14px;
}

.details .panel {
    margin: 0 6px 0 4px;
}

.details .positions {
    height: 145px;
    margin-top: 5px;
}

.panel-row {
    display: flex;
}

.list {
    flex: 1;
    overflow: hidden;
    background-color: #fff;
}

.positions .panel-row {
    height: 123px;
}

table {
    border-collapse: collapse;
    table-layout: fixed;
}

th,
td {
    padding: 0 6px;
    font-weight: normal;
    text-align: left;
    white-space: nowrap;
    overflow: hidden;
}

.grid th {
    height: 22px;
    border-right: 1px solid #c4c4c4;
    border-bottom: 1px solid #c4c4c4;
    background-image: linear-gradient(#fff, #dcdcdc);
}

.grid td {
    height: 24px;
    border-right: 1px solid #ececec;
    border-bottom: 1px solid #ececec;
    background-color: #fff;
}

.grid .selected td {
    background-color: #b0cff7;
}

.positions-table {
    width: 400px;
}

.positions-table th:nth-child(1) {
    width: 32px;
}

.positions-table th:nth-child(2) {
    width: 214px;
}

.side-icons {
    display: flex;
    flex-direction: column;
    align-items: center;
    gap: 10px;
    width: 31px;
    padding-top: 7px;
    background-color: #f0f0f0;
}

.side-icons svg {
    width: 20px;
    height: 20px;
}

.splitter {
    flex: none;
    width: 125px;
    height: 11px;
    margin: 2px auto 1px 169px;
    border: 1px solid #888;
}

.splitter svg {
    width: 123px;
    height: 9px;
}

.layers .list {
    height: 208px;
}

.layers-table {
    width: 100%;
}

.layers-table th {
    height: 30px;
    border-right: 1px solid #e4e4e4;
}

.layers-table td {
    height: 21px;
    border-right: 1px solid #f0f0f0;
    border-bottom: 1px solid #f0f0f0;
    line-height: 18px;
}

.layers-table th:nth-child(1) {
    width: 44px;
}

.layers-table th:nth-child(2) {
    width: 31px;
}

.layers-table th:nth-child(3) {
    width: 218px;
}

.layers-table th:nth-child(4) {
    width: 82px;
}

.layers-table td:first-child {
    padding-left: 5px;
}

.layers-table .check {
    gap: 7px;
}

.layers-table .right {
    padding-right: 9px;
    text-align: right;
}

.layers-table .current td:not(:last-child) {
    background-color: #d9d9d9;
    border-top: 1px solid #999;
}

.layers-table .current td:nth-child(4) {
    border-right-color: #999;
}

.total {
    display: flex;
    justify-content: space-between;
    align-items: center;
    height: 31px;
    padding: 1px 2px 0 18px;
    border-top: 1px solid #a0a0a0;
}

.total input {
    width: 81px;
    height: 25px;
    padding: 0 6px;
    border: 0;
    border-bottom: 1px solid #8a8a8a;
    background-color: #fff;
    text-align: right;
}

.options {
    padding: 5px 8px 6px 9px;
}

.option {
    height: 29px;
    margin-bottom: 4px;
    padding-left: 4px;
}

.user {
    background-color: #d1f0d8;
}

.legend {
    font-size: 14px;
    font-weight: bold;
    color: #111;
}

.legend li {
    height: 21px;
    line-height: 21px;
}

.legend .same,
.results-table .same {
    background-color: #4caf22;
}

.thick {
    background-color: #0f0;
}

.legend .less,
.results-table .less,
.results-table .selected .less {
    background-color: #ff0;
}

.more {
    background-color: #ffc90e;
}

.results {
    height: 198px;
    margin-right: 1px;
    border-left: 1px solid #a0a0a0;
    border-bottom: 1px solid #f8f8f8;
}

.result-list {
    width: 393px;
    height: 155px;
    overflow: hidden;
    background-color: #fff;
}

.results-table {
    width: 393px;
}

.results-table th,
.results-table td {
    padding: 0 0 0 7px;
}

.results-table th:nth-child(1) {
    width: 28px;
}

.results-table th:nth-child(2) {
    width: 101px;
}

.results-table th:nth-child(3) {
    width: 95px;
}

.results-table th:nth-child(4) {
    width: 24px;
}

.results-table td:first-child {
    padding: 0 2px;
}

.results-table .selected {
    outline: 1px dotted #000;
    outline-offset: -1px;
}

.mark {
    width: 14px;
    height: 18px;
}

.pfb {
    color: #2a7ab8;
    font-size: 12px;
    font-weight: bold;
}

.thumb-v {
    width: 2px;
    height: 21px;
    margin: 21px 14px 0 10px;
    background-color: #8a8a8a;
}

.thumb-h {
    width: 21px;
    height: 2px;
    margin: 9px 0 0 22px;
    background-color: #8a8a8a;
}

.side-icons.wide {
    gap: 14px;
    width: 28px;
}

.side-icons.wide svg {
    width: 24px;
    height: 22px;
}

.actions {
    display: flex;
    gap: 10px;
    padding: 5px 4px 5px 5px;
}

.actions button {
    flex: 1;
    height: 22px;
    border: 1px solid #d4d4d4;
    border-radius: 4px;
    background-color: #fdfdfd;
}

.note {
    flex: 1;
    display: flex;
    flex-direction: column;
    min-height: 0;
}

.note .memo {
    flex: 1;
    height: auto;
    border: 0;
}

.note .memo textarea {
    background-color: #fff;
}

.statusbar {
    height: 25px;
    border-top: 1px solid #d8d8d8;
}
```
